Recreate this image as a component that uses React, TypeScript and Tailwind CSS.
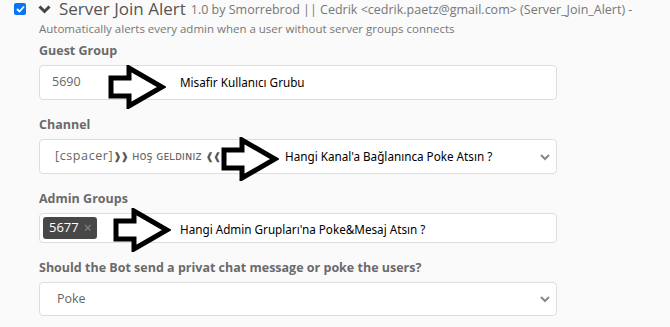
import type { ReactNode } from 'react'

function Arrow() {
  return (
    <svg width="58" height="44" viewBox="0 0 58 44" className="block">
      <path
        d="M3 13 H21 V3 L54 22 L21 41 V31 H3 Z"
        fill="white"
        stroke="black"
        strokeWidth="5"
        strokeLinejoin="miter"
      />
    </svg>
  )
}

function SelectChevron() {
  return (
    <svg width="12" height="8" viewBox="0 0 12 8" className="absolute right-[5px] top-1/2 -translate-y-1/2">
      <path d="M2 2 L6 6 L10 2" fill="none" stroke="#888" strokeWidth="2" />
    </svg>
  )
}

function Field({ label, children }: { label: string; children: ReactNode }) {
  return (
    <div className="w-[518px]">
      <div className="h-4 text-[12.5px] font-bold leading-4 text-[#6a6a6a]">{label}</div>
      <div className="mt-[6px]">{children}</div>
    </div>
  )
}

function Note({ children }: { children: ReactNode }) {
  return (
    <span className="whitespace-nowrap font-['Noto_Sans',sans-serif] text-[11.7px] text-black">{children}</span>
  )
}

export default function App() {
  return (
    <div className="min-h-[327px] overflow-hidden bg-[#fafafa] font-['Open_Sans',sans-serif]">
      <div className="-mt-[2px] flex h-[22px] items-center pl-[14px]">
        <span className="flex h-[12px] w-[12px] items-center justify-center rounded-[2px] bg-[#0b74f0]">
          <svg width="9" height="8" viewBox="0 0 9 8">
            <path d="M1 4 L3.5 6.5 L8 1.5" fill="none" stroke="white" strokeWidth="1.8" />
          </svg>
        </span>
        <svg width="13" height="9" viewBox="0 0 13 9" className="ml-[12px]">
          <path d="M1.5 1.5 L6.5 6.5 L11.5 1.5" fill="none" stroke="#444" strokeWidth="3" />
        </svg>
        <span className="ml-[8px] whitespace-nowrap text-[17px] leading-[22px] text-[#555]">Server Join Alert</span>
        <span className="ml-[5px] whitespace-nowrap pt-[2px] text-[12.5px] leading-[20px] text-[#777]">
          1.0 by Smorrebrod || Cedrik &lt;cedrik.paetz@gmail.com&gt; (Server_Join_Alert) -
        </span>
      </div>

      <div className="pl-[39px]">
        <div className="mt-[2px] h-[14px] whitespace-nowrap text-[11.5px] leading-[14px] text-[#777]">
          Automatically alerts every admin when a user without server groups connects
        </div>

        <div className="mt-[7px] flex flex-col gap-[17px]">
          <Field label="Guest Group">
            <div className="relative flex h-[35px] items-center rounded-[4px] border border-[#ddd] bg-white pl-[12px] text-[12.5px] text-[#666]">
              5690
              <div className="absolute left-[68px] top-[-1px]">
                <Arrow />
              </div>
              <div className="absolute left-[140px] top-1/2 -translate-y-1/2">
                <Note>Misafir Kullanıcı Grubu</Note>
              </div>
            </div>
          </Field>

          <Field label="Channel">
            <div className="relative flex h-[35px] items-center rounded-[4px] border border-[#ddd] bg-white pl-[15px] text-[12.5px] text-[#666]">
              <span className="flex items-center whitespace-nowrap">
                <span className="tracking-[0.6px]">[cspacer]</span>
                <span className="font-['DejaVu_Sans',sans-serif] text-[10px] font-bold tracking-[-1px] text-[#555]">❱❱</span>
                <span className="ml-[4px] font-['DejaVu_Sans',sans-serif] text-[11.5px] text-[#666]">ʜᴏş ɢᴇʟᴅıɴıᴢ</span>
                <span className="ml-[4px] font-['DejaVu_Sans',sans-serif] text-[10px] font-bold tracking-[-1px] text-[#555]">❰❰</span>
              </span>
              <div className="absolute left-[181px] top-[-3px]">
                <Arrow />
              </div>
              <div className="absolute left-[245px] top-[8px]">
                <Note>Hangi Kanal'a Bağlanınca Poke Atsın ?</Note>
              </div>
              <SelectChevron />
            </div>
          </Field>

          <Field label="Admin Groups">
            <div className="relative flex h-[30px] items-center rounded-[4px] border border-[#ddd] bg-white pl-[3px]">
              <span className="flex h-[22px] w-[54px] items-center gap-[5px] rounded-[3px] bg-[#474747] pl-[6px] text-[13px] text-white">
                5677 <span className="text-[14px] leading-none text-[#8a8a8a]">×</span>
              </span>
              <div className="absolute left-[73px] top-[-6px]">
                <Arrow />
              </div>
              <div className="absolute left-[140px] top-1/2 -translate-y-1/2">
                <Note>Hangi Admin Grupları'na Poke&amp;Mesaj Atsın ?</Note>
              </div>
            </div>
          </Field>

          <Field label="Should the Bot send a privat chat message or poke the users?">
            <div className="relative flex h-[34px] items-center rounded-[4px] border border-[#ddd] bg-white pl-[17px] text-[12.5px] text-[#666]">
              Poke
              <SelectChevron />
            </div>
          </Field>
        </div>
      </div>
    </div>
  )
}
